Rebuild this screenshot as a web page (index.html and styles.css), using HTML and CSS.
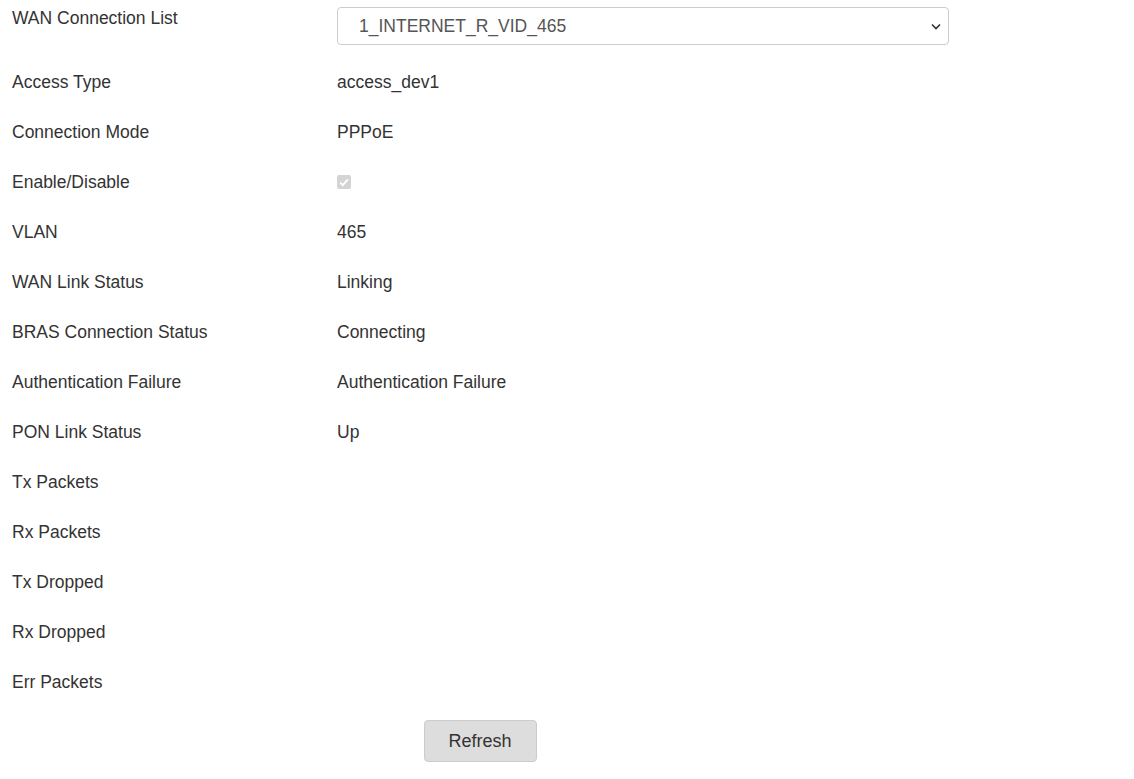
FILE: index.html
```html
<!DOCTYPE html>
<html>
<head>
<meta charset="utf-8">
<link rel="stylesheet" href="styles.css">
</head>
<body>
<div class="page">
  <div class="form">
    <div class="row first">
      <div class="label">WAN Connection List</div>
      <div class="value">
        <div class="select">
          <span class="select-text">1_INTERNET_R_VID_465</span>
          <svg class="chev" width="10" height="7" viewBox="0 0 10 7"><path d="M1 1.5 L5 5.5 L9 1.5" fill="none" stroke="#333" stroke-width="1.6"/></svg>
        </div>
      </div>
    </div>
    <div class="row"><div class="label">Access Type</div><div class="value">access_dev1</div></div>
    <div class="row"><div class="label">Connection Mode</div><div class="value">PPPoE</div></div>
    <div class="row"><div class="label">Enable/Disable</div><div class="value"><span class="check"><svg width="10" height="9" viewBox="0 0 10 9"><path d="M1.2 4.6 L3.8 7.2 L8.8 1.4" fill="none" stroke="#fff" stroke-width="1.8"/></svg></span></div></div>
    <div class="row"><div class="label">VLAN</div><div class="value">465</div></div>
    <div class="row"><div class="label">WAN Link Status</div><div class="value">Linking</div></div>
    <div class="row"><div class="label">BRAS Connection Status</div><div class="value">Connecting</div></div>
    <div class="row"><div class="label">Authentication Failure</div><div class="value">Authentication Failure</div></div>
    <div class="row"><div class="label">PON Link Status</div><div class="value">Up</div></div>
    <div class="row"><div class="label">Tx Packets</div><div class="value"></div></div>
    <div class="row"><div class="label">Rx Packets</div><div class="value"></div></div>
    <div class="row"><div class="label">Tx Dropped</div><div class="value"></div></div>
    <div class="row"><div class="label">Rx Dropped</div><div class="value"></div></div>
    <div class="row"><div class="label">Err Packets</div><div class="value"></div></div>
  </div>
  <div class="actions">
    <button class="btn">Refresh</button>
  </div>
</div>
</body>
</html>
```
FILE: styles.css
```css
html, body {
  margin: 0;
  padding: 0;
  background: #fff;
}
body {
  font-family: "Liberation Sans", Arial, sans-serif;
  font-size: 17.5px;
  color: #333;
}
.page {
  width: 960px;
}
.form {
  padding-left: 12px;
}
.row {
  display: grid;
  grid-template-columns: 325px 612px;
  height: 50px;
  align-items: center;
}
.row.first {
  height: 57px;
  align-items: start;
}
.row.first .label {
  padding-top: 8px;
}
.row.first .value {
  padding-top: 7px;
}
.label, .value {
  line-height: 20px;
}
.select {
  box-sizing: border-box;
  height: 38px;
  width: 612px;
  border: 1px solid #ccc;
  border-radius: 4px;
  display: flex;
  align-items: center;
  justify-content: space-between;
  padding: 0 7px 0 21px;
  color: #555;
}
.chev {
  display: block;
}
.check {
  display: inline-flex;
  align-items: center;
  justify-content: center;
  width: 14px;
  height: 14px;
  border-radius: 2px;
  background: #d4d4d4;
  vertical-align: middle;
  margin-top: -2px;
}
.check svg {
  display: block;
}
.actions {
  display: flex;
  justify-content: center;
  padding-top: 13px;
}
.btn {
  box-sizing: border-box;
  width: 113px;
  height: 42px;
  font-family: "Liberation Sans", Arial, sans-serif;
  font-size: 18px;
  color: #333;
  background: #ddd;
  border: 1px solid #ccc;
  border-radius: 4px;
  padding: 0;
}
```
